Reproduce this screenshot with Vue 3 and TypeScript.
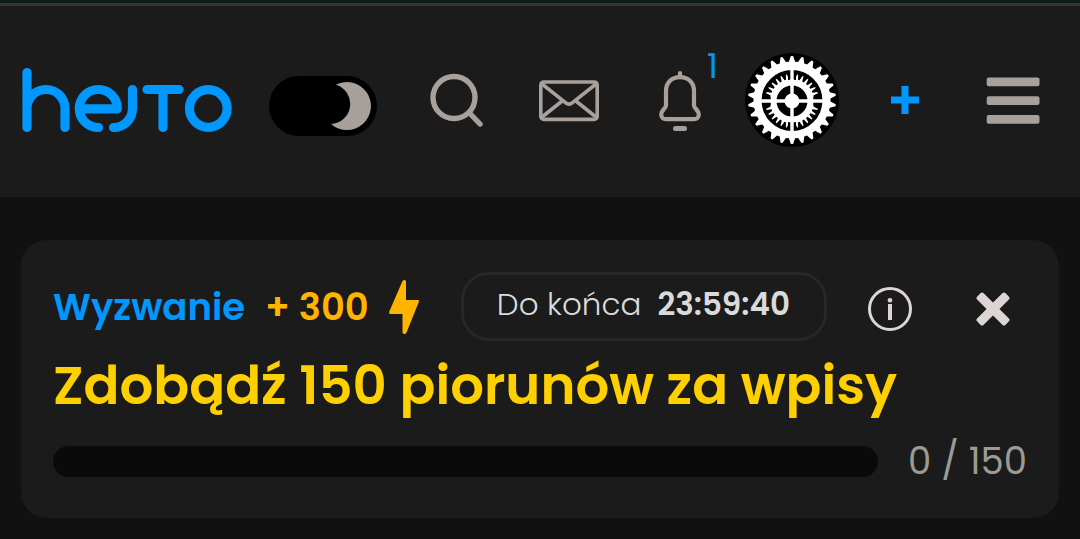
<script setup lang="ts">
import { computed, ref } from 'vue'

const darkMode = ref(true)
const challengeOpen = ref(true)
const notifications = ref(1)

const challenge = {
  label: 'Wyzwanie',
  reward: '+ 300',
  timeLabel: 'Do końca',
  timeLeft: '23:59:40',
  title: 'Zdobądź 150 piorunów za wpisy',
  done: 0,
  goal: 150,
}

const progress = computed(() => `${(challenge.done / challenge.goal) * 100}%`)

function gearPath(teeth: number, root: number, tip: number, baseShare: number, tipShare: number): string {
  const step = (Math.PI * 2) / teeth
  const at = (radius: number, angle: number) =>
    `${(Math.sin(angle) * radius).toFixed(2)} ${(-Math.cos(angle) * radius).toFixed(2)}`
  const points: string[] = []
  for (let i = 0; i < teeth; i++) {
    const a = i * step
    points.push(at(root, a - step * baseShare))
    points.push(at(tip, a - step * tipShare))
    points.push(at(tip, a + step * tipShare))
    points.push(at(root, a + step * baseShare))
  }
  return `M${points.join('L')}Z`
}

const outerGear = gearPath(26, 38.5, 44, 0.34, 0.1)
const innerGear = gearPath(30, 22, 27, 0.32, 0.1)
</script>

<template>
  <div class="page">
    <header class="topbar">
      <div class="brand">
        <a href="#" class="logo" aria-label="hejto">
          <svg width="210" height="66" viewBox="22 67 210 66" fill="none" stroke="currentColor" stroke-width="9.2" stroke-linecap="round" stroke-linejoin="round">
            <path d="M27 72.5V127.5M27 108.5A19 19 0 0 1 65 108.5V127.5" />
            <path d="M98.5 127.5A19 19 0 1 1 117.3 108.9H82" />
            <path d="M132.5 89.5V108.5A19 19 0 0 1 113.5 127.5" />
            <path d="M147 89.5H179M163 89.5V127.5" />
            <circle cx="208.3" cy="108.5" r="18.8" />
          </svg>
        </a>
        <label class="theme">
          <input v-model="darkMode" type="checkbox" aria-label="Tryb ciemny" />
          <svg width="108" height="60" viewBox="0 0 108 60" aria-hidden="true">
            <path d="M67 8.7A24 24 0 1 1 62 48A20.1 20.1 0 0 0 67 8.7Z" fill="#a8a09b" />
          </svg>
        </label>
      </div>

      <nav class="tools">
        <button type="button" aria-label="Szukaj">
          <svg class="icon" viewBox="0 0 60 60">
            <circle cx="27" cy="27.5" r="21" stroke-width="5.4" />
            <path d="M42.5 43L53 54" stroke-width="5.4" />
          </svg>
        </button>
        <button type="button" aria-label="Wiadomości">
          <svg class="icon" viewBox="0 0 60 60" stroke-width="3.6">
            <rect x="1.8" y="12" width="56.4" height="37.4" rx="3" />
            <path d="M3 14L26.5 32.6Q30 35.6 33.5 32.6L57 14M3 47L22.5 31.5M57 47L37.5 31.5" />
          </svg>
        </button>
        <button type="button" aria-label="Powiadomienia">
          <svg class="icon" viewBox="0 0 60 60" stroke-width="4.2">
            <path d="M29 3V7" />
            <path d="M29 7.2C20.5 7.2 15 13 15 21V35.5C15 38.5 10.2 40 10.2 44.5C10.2 47.5 12.2 49.2 15 49.2H43C45.8 49.2 47.8 47.5 47.8 44.5C47.8 40 43 38.5 43 35.5V21C43 13 37.5 7.2 29 7.2Z" />
            <path d="M24.5 58.5H33.5" stroke-width="5" />
          </svg>
          <span class="badge">{{ notifications }}</span>
        </button>
      </nav>

      <div class="actions">
        <button type="button" class="avatar" aria-label="Profil">
          <svg width="94" height="94" viewBox="-47 -47 94 94">
            <circle r="47" fill="#000" />
            <path :d="outerGear" fill="#fff" />
            <circle r="30.5" cy="0.5" fill="#000" />
            <g transform="translate(0 1)">
              <path :d="innerGear" fill="#fff" />
              <path d="M0 -30V29M-30 0H30" stroke="#000" stroke-width="8" />
              <circle r="21.5" fill="#fff" />
              <circle r="15.5" fill="#000" />
              <path d="M0 -31V31M-31 0H31" stroke="#fff" stroke-width="3.4" />
              <circle r="7.5" fill="#fff" />
            </g>
          </svg>
        </button>
        <button type="button" class="wide add" aria-label="Dodaj">
          <svg width="28" height="28" viewBox="0 0 28 28"><path d="M14 0V28M0 14H28" stroke="currentColor" stroke-width="7" /></svg>
        </button>
        <button type="button" class="wide" aria-label="Menu">
          <svg width="54" height="48" viewBox="0 0 54 48" fill="currentColor">
            <rect x="0.7" y="1.5" width="52.8" height="8.8" rx="2" />
            <rect x="0.7" y="20.2" width="52.8" height="8.8" rx="2" />
            <rect x="0.7" y="38.9" width="52.8" height="8.8" rx="2" />
          </svg>
        </button>
      </div>
    </header>

    <main>
      <section v-if="challengeOpen" class="card">
        <div class="row">
          <span class="label">{{ challenge.label }}</span>
          <span class="reward">{{ challenge.reward }}</span>
          <svg class="bolt" width="30" height="54" viewBox="0 0 30 54" aria-hidden="true">
            <path d="M13.5 1Q14.2 0 15.5 0Q17 0 17 1.5V20H29Q30.5 20 29.8 22L17.5 52.5Q16.8 54 15.3 54Q13.5 54 13.5 52V34H1.5Q-0.5 34 0.3 31.5Z" fill="currentColor" />
          </svg>
          <p class="timer"><span>{{ challenge.timeLabel }}</span><strong>{{ challenge.timeLeft }}</strong></p>
          <div class="controls">
            <button type="button" aria-label="Informacje">
              <svg width="44" height="44" viewBox="0 0 44 44">
                <circle cx="22" cy="22" r="20.5" fill="none" stroke="currentColor" stroke-width="3" />
                <path d="M20 17H24V33H20Z" fill="currentColor" />
                <circle cx="22" cy="13.3" r="2.3" fill="currentColor" />
              </svg>
            </button>
            <button type="button" aria-label="Zamknij" @click="challengeOpen = false">
              <svg width="34" height="34" viewBox="-17 -17 34 34" fill="currentColor">
                <rect x="-20" y="-4.5" width="40" height="9" rx="2" transform="rotate(45)" />
                <rect x="-20" y="-4.5" width="40" height="9" rx="2" transform="rotate(-45)" />
              </svg>
            </button>
          </div>
        </div>
        <h1>{{ challenge.title }}</h1>
        <div class="status">
          <div class="track" role="progressbar" aria-label="Postęp" :aria-valuenow="challenge.done" aria-valuemin="0" :aria-valuemax="challenge.goal">
            <div class="fill" :style="{ width: progress }"></div>
          </div>
          <span class="count">{{ challenge.done }} / {{ challenge.goal }}</span>
        </div>
      </section>
    </main>
  </div>
</template>

<style>
body {
  margin: 0;
  background: #111;
}
</style>

<style scoped>
.page {
  min-height: 100vh;
  box-sizing: border-box;
  border-top: 3px solid #0e1a14;
  background: #111;
  color: #dadada;
  font-family: Poppins, Inter, sans-serif;
}
button {
  display: flex;
  align-items: center;
  justify-content: center;
  padding: 0;
  border: 0;
  background: none;
  color: inherit;
  font: inherit;
  cursor: pointer;
}
svg {
  display: block;
  flex: none;
}
.topbar {
  display: flex;
  align-items: center;
  padding: 47px 25px 50px 22px;
  border-top: 3px solid #343634;
  background: #1b1b1b;
  color: #a8a09b;
}
.brand {
  display: flex;
  align-items: center;
  gap: 37px;
  margin-right: 50px;
}
.logo {
  color: #0098ff;
}
.theme {
  display: block;
  margin-top: 12px;
  border-radius: 30px;
  background: #000;
  cursor: pointer;
}
.theme input {
  position: absolute;
  opacity: 0;
}
.tools {
  display: flex;
  gap: 52px;
}
.tools button {
  position: relative;
}
.icon {
  width: 60px;
  height: 60px;
  overflow: visible;
  fill: none;
  stroke: currentColor;
  stroke-linecap: round;
  stroke-linejoin: round;
}
.badge {
  position: absolute;
  top: -24px;
  right: -7px;
  color: #0098ff;
  font-size: 34px;
  font-weight: 400;
  line-height: 40px;
}
.actions {
  display: flex;
  align-items: center;
  gap: 24px;
  margin-left: auto;
}
.avatar {
  border-radius: 50%;
}
.wide {
  width: 84px;
  height: 60px;
}
.add {
  color: #0098ff;
}
.card {
  margin: 43px 21px 0;
  padding: 32px 32px 33px;
  border-radius: 26px;
  background: #1b1b1b;
}
.row {
  display: flex;
  align-items: center;
}
.label {
  color: #0098ff;
  font-size: 37px;
  font-weight: 600;
}
.reward {
  margin-left: 20px;
  color: #ffb400;
  font-size: 37px;
  font-weight: 600;
}
.bolt {
  margin-left: 20px;
  color: #ffb400;
}
.timer {
  display: flex;
  gap: 16px;
  margin: 0 0 0 42px;
  padding: 6px 34px 10px 33px;
  border: 3px solid #272727;
  border-radius: 28px;
  font-size: 31px;
  line-height: 47px;
  font-weight: 300;
}
.timer strong {
  font-weight: 600;
}
.controls {
  display: flex;
  align-items: center;
  gap: 64px;
  margin-top: 4px;
  margin-left: auto;
  margin-right: 17px;
  color: #ddd5d3;
}
h1 {
  margin: 9px 0 0;
  color: #ffd000;
  font-size: 53px;
  line-height: 72px;
  font-weight: 600;
}
.status {
  display: flex;
  align-items: center;
  gap: 30px;
  margin-top: 15px;
}
.track {
  flex: 1;
  height: 31px;
  border-radius: 16px;
  background: #0a0a0a;
  overflow: hidden;
}
.fill {
  height: 100%;
  background: #ffd000;
}
.count {
  color: #9b9b93;
  font-size: 37px;
  line-height: 48px;
  font-weight: 400;
}
</style>
